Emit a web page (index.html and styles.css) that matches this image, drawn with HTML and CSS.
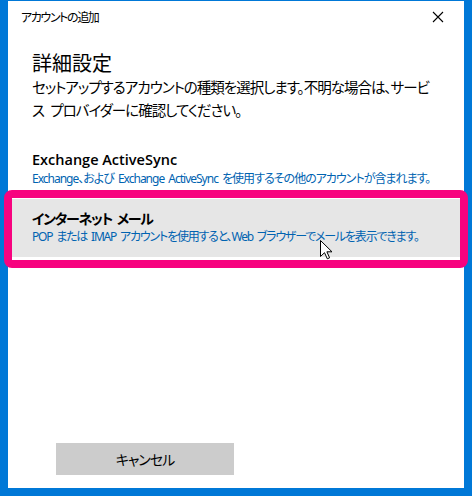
FILE: index.html
```html
<!DOCTYPE html>
<html lang="ja">
<head>
<meta charset="utf-8">
<link rel="stylesheet" href="styles.css">
</head>
<body>
<div class="dialog">
  <div class="titlebar">
    <span class="title">アカウントの追加</span>
    <svg class="close" width="12" height="12" viewBox="0 0 12 12"><path d="M1 1 L11 11 M11 1 L1 11" stroke="#000" stroke-width="1.1" fill="none"/></svg>
  </div>
  <div class="content">
    <h1 class="heading">詳細設定</h1>
    <p class="desc">セットアップするアカウントの種類を選択します。不明な場合は、サービ<br>ス プロバイダーに確認してください。</p>
  </div>
  <div class="list">
    <div class="item">
      <div class="item-title">Exchange ActiveSync</div>
      <div class="item-sub">Exchange、および Exchange ActiveSync を使用するその他のアカウントが含まれます。</div>
    </div>
    <div class="item item-hover">
      <div class="item-title">インターネット メール</div>
      <div class="item-sub">POP または IMAP アカウントを使用すると、Web ブラウザーでメールを表示できます。</div>
    </div>
  </div>
  <div class="spacer"></div>
  <div class="footer">
    <button class="cancel">キャンセル</button>
  </div>
</div>
<div class="highlight"></div>
<svg class="cursor" width="13" height="20" viewBox="0 0 13 20"><path d="M0.5 0.5 L0.5 16.5 L4.5 12.7 L7.3 18.8 L9.6 17.8 L6.9 11.8 L12 11.8 Z" fill="#fff" stroke="#000" stroke-width="1" stroke-linejoin="miter"/></svg>
</body>
</html>
```
FILE: styles.css
```css
html, body {
  margin: 0;
  padding: 0;
}
body {
  width: 472px;
  height: 496px;
  background: #0078d7;
  box-sizing: border-box;
  padding: 1px 8px 8px 8px;
  position: relative;
  font-family: "Noto Sans CJK JP", "Noto Sans", sans-serif;
  font-feature-settings: "palt";
  overflow: hidden;
}
.dialog {
  background: #fff;
  height: 487px;
  display: flex;
  flex-direction: column;
}
.titlebar {
  height: 31px;
  flex: none;
  display: flex;
  align-items: center;
  justify-content: space-between;
  padding: 0 20px 0 13px;
}
.title {
  font-size: 12px;
  letter-spacing: -1.4px;
  color: #000;
}
.close {
  display: block;
}
.content {
  padding: 19px 24px 0 24px;
}
.heading {
  margin: 0;
  font-size: 20px;
  font-weight: 400;
  line-height: 24px;
  color: #000;
}
.desc {
  margin: 0;
  font-size: 14.5px;
  line-height: 23px;
  color: #000;
  letter-spacing: -1px;
  word-spacing: 4px;
  white-space: nowrap;
}
.list {
  margin-top: 20px;
  display: flex;
  flex-direction: column;
}
.item {
  height: 58px;
  box-sizing: border-box;
  padding: 9px 24px 0 24px;
}
.item-hover {
  background: #e6e6e6;
}
.item-title {
  font-family: "Open Sans", "Noto Sans CJK JP", sans-serif;
  font-size: 14.5px;
  font-weight: 600;
  line-height: 20px;
  color: #000;
  white-space: nowrap;
}
.item-hover .item-title {
  font-family: "Noto Sans CJK JP", sans-serif;
  font-size: 14px;
  font-weight: 700;
  letter-spacing: -1.3px;
  word-spacing: 3px;
}
.item-sub {
  font-family: "Noto Sans", "Noto Sans CJK JP", sans-serif;
  font-size: 12px;
  line-height: 18px;
  color: #0063b1;
  white-space: nowrap;
  letter-spacing: -1px;
  word-spacing: 2px;
}
.item-hover .item-sub {
  letter-spacing: -1.2px;
}
.spacer {
  flex: 1;
}
.footer {
  padding: 0 0 13px 48px;
}
.cancel {
  width: 178px;
  height: 32px;
  border: none;
  background: #cccccc;
  font-family: "Noto Sans CJK JP", sans-serif;
  font-feature-settings: "palt";
  font-size: 14px;
  letter-spacing: -1px;
  color: #000;
  padding: 0;
}
.highlight {
  position: absolute;
  left: 4px;
  top: 190px;
  width: 464px;
  height: 78px;
  box-sizing: border-box;
  border: 8px solid #f7037f;
  border-radius: 8px;
}
.cursor {
  position: absolute;
  left: 320px;
  top: 240px;
}
```
